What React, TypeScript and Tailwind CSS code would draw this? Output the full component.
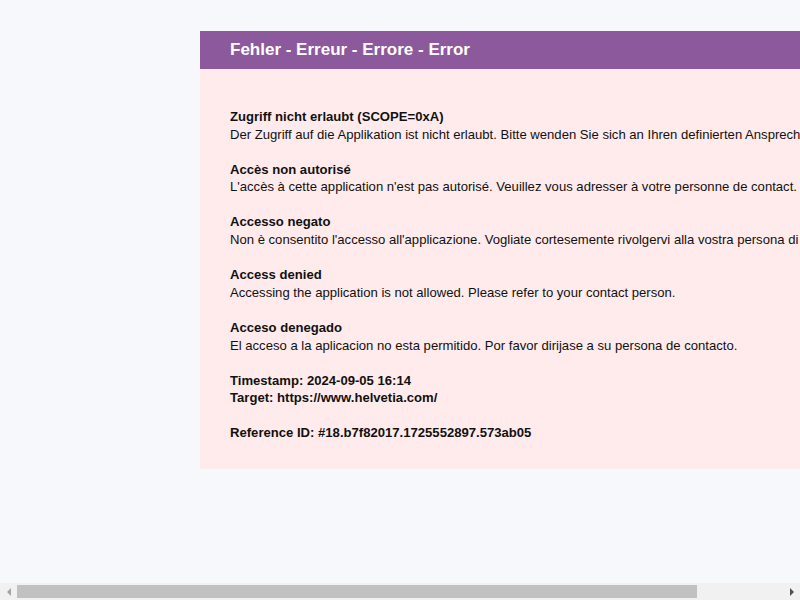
import React from "react";

const sections = [
  {
    title: "Zugriff nicht erlaubt (SCOPE=0xA)",
    text: "Der Zugriff auf die Applikation ist nicht erlaubt. Bitte wenden Sie sich an Ihren definierten Ansprechpartner.",
  },
  {
    title: "Accès non autorisé",
    text: "L'accès à cette application n'est pas autorisé. Veuillez vous adresser à votre personne de contact.",
  },
  {
    title: "Accesso negato",
    text: "Non è consentito l'accesso all'applicazione. Vogliate cortesemente rivolgervi alla vostra persona di contatto.",
  },
  {
    title: "Access denied",
    text: "Accessing the application is not allowed. Please refer to your contact person.",
  },
  {
    title: "Acceso denegado",
    text: "El acceso a la aplicacion no esta permitido. Por favor dirijase a su persona de contacto.",
  },
];

function Scrollbar() {
  return (
    <div className="h-[17px] bg-[#f1f1f1] flex items-center">
      <div className="w-[17px] flex justify-center">
        <div className="w-0 h-0 border-y-[4px] border-y-transparent border-r-[4px] border-r-[#a3a3a3]" />
      </div>
      <div className="flex-1 h-[13px]">
        <div className="w-[680px] h-full bg-[#c1c1c1]" />
      </div>
      <div className="w-[17px] flex justify-center">
        <div className="w-0 h-0 border-y-[4px] border-y-transparent border-l-[4px] border-l-[#505050]" />
      </div>
    </div>
  );
}

export default function App() {
  return (
    <div className="w-[800px] h-[600px] flex flex-col overflow-hidden bg-[#f7f8fc] font-['Liberation_Sans',Arial,sans-serif]">
      <div className="flex-1 overflow-hidden">
        <div className="w-[900px] pt-[31px] text-[13.1px] leading-[17.58px] text-[#111]">
          <div className="ml-[200px] w-[700px] bg-[#ffebeb]">
            <div className="h-[38px] bg-[#8c5a9c] px-[30px] flex items-center">
              <h1 className="text-white font-bold text-[17px] leading-[17.5px] whitespace-nowrap">
                Fehler - Erreur - Errore - Error
              </h1>
            </div>
            <div className="px-[30px] pt-[39px] pb-[27px] whitespace-nowrap">
              {sections.map((s) => (
                <div key={s.title} className="mb-[17.58px]">
                  <div className="font-bold">{s.title}</div>
                  <div>{s.text}</div>
                </div>
              ))}
              <div className="font-bold">Timestamp: 2024-09-05 16:14</div>
              <div className="font-bold">Target: https://www.helvetia.com/</div>
              <div className="font-bold mt-[17.58px]">
                Reference ID: #18.b7f82017.1725552897.573ab05
              </div>
            </div>
          </div>
        </div>
      </div>
      <Scrollbar />
    </div>
  );
}
